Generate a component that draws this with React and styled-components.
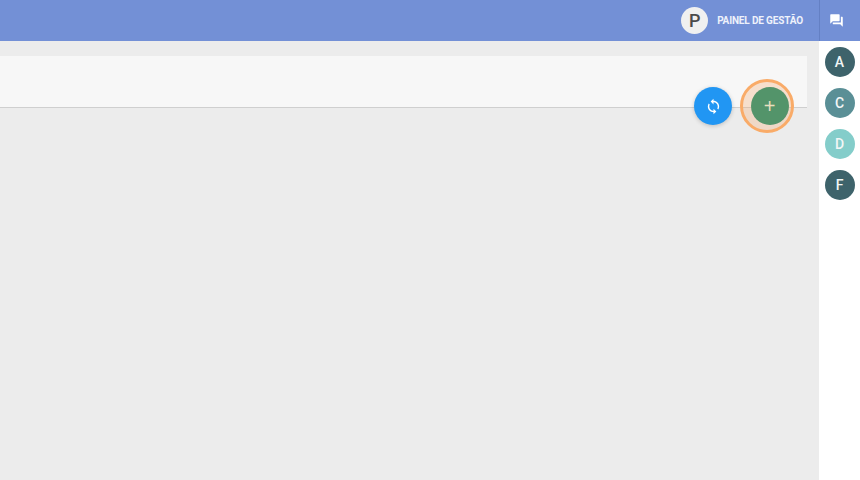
import styled, { createGlobalStyle } from "styled-components";
import { MdForum } from "react-icons/md";

const GlobalStyle = createGlobalStyle`
  html, body {
    margin: 0;
    padding: 0;
    height: 100%;
    overflow: hidden;
    background-color: #ececec;
    font-family: Roboto, "Liberation Sans", sans-serif;
  }
`;

const Page = styled.div`
  width: 860px;
  height: 480px;
  display: flex;
  flex-direction: column;
  overflow: hidden;
`;

const TopBar = styled.header`
  height: 41px;
  flex-shrink: 0;
  display: flex;
  justify-content: flex-end;
  align-items: stretch;
  background-color: #7390d6;
`;

const UserBox = styled.div`
  display: flex;
  align-items: center;
  gap: 9px;
  padding-right: 16px;
`;

const UserAvatar = styled.div`
  width: 27px;
  height: 27px;
  border-radius: 50%;
  display: flex;
  align-items: center;
  justify-content: center;
  background-color: #f0f0f0;
  color: #4a4a4a;
  font-size: 18px;
  font-weight: 500;
`;

const UserLabel = styled.span`
  color: #eef2fb;
  font-size: 10px;
  font-weight: 700;
  letter-spacing: -0.15px;
`;

const ChatButton = styled.div`
  width: 41px;
  box-sizing: border-box;
  padding-right: 7px;
  display: flex;
  align-items: center;
  justify-content: center;
  color: #fff;
  border-left: 1px solid #6480c4;
  font-size: 15px;
`;

const Body = styled.div`
  flex: 1;
  display: flex;
  min-height: 0;
`;

const Main = styled.main`
  flex: 1;
  padding: 15px 12px 0 0;
  min-width: 0;
`;

const Card = styled.section`
  position: relative;
  height: 51px;
  background-color: #f7f7f7;
  border-bottom: 1px solid #cfcfcf;
`;

const Fab = styled.button`
  padding: 0;
  width: 38px;
  height: 38px;
  flex-shrink: 0;
  border: none;
  border-radius: 50%;
  display: flex;
  align-items: center;
  justify-content: center;
  color: #fff;
  background-color: ${(props) => props.color};
`;

const RefreshFab = styled(Fab)`
  position: absolute;
  top: 31px;
  right: 75px;
  box-shadow: 0 1px 4px rgba(0, 0, 0, 0.2);
`;

const AddRing = styled.div`
  position: absolute;
  top: 23px;
  right: 13px;
  width: 54px;
  height: 54px;
  box-sizing: border-box;
  padding-right: 2px;
  display: flex;
  align-items: center;
  justify-content: flex-end;
  border: 3px solid #f9ab68;
  border-radius: 50%;
  background-color: rgba(245, 170, 110, 0.3);
`;

const Plus = styled.span`
  margin-right: 1px;
  color: #e8dfbe;
  font-size: 20px;
  font-weight: 400;
  line-height: 1;
`;

const Sidebar = styled.aside`
  width: 41px;
  flex-shrink: 0;
  display: flex;
  flex-direction: column;
  align-items: center;
  gap: 11px;
  padding-top: 6px;
  background-color: #fff;
`;

const Contact = styled.div`
  width: 30px;
  height: 30px;
  border-radius: 50%;
  display: flex;
  align-items: center;
  justify-content: center;
  color: #f2f6f6;
  font-size: 14px;
  font-weight: 500;
  background-color: ${(props) => props.color};
`;

const contacts = [
  { letter: "A", color: "#3e636b" },
  { letter: "C", color: "#5a8f96" },
  { letter: "D", color: "#84cdca" },
  { letter: "F", color: "#3e636b" },
];

function RefreshIcon() {
  return (
    <svg width="17" height="17" viewBox="0 0 24 24" fill="currentColor">
      <path d="M12 4V1L8 5l4 4V6c3.31 0 6 2.69 6 6 0 1.01-.25 1.97-.7 2.8l1.46 1.46C19.54 15.03 20 13.57 20 12c0-4.42-3.58-8-8-8zm0 14c-3.31 0-6-2.69-6-6 0-1.01.25-1.97.7-2.8L5.24 7.74C4.46 8.97 4 10.43 4 12c0 4.42 3.58 8 8 8v3l4-4-4-4v3z" />
    </svg>
  );
}

function App() {
  return (
    <Page>
      <GlobalStyle />
      <TopBar>
        <UserBox>
          <UserAvatar>P</UserAvatar>
          <UserLabel>PAINEL DE GESTÃO</UserLabel>
        </UserBox>
        <ChatButton>
          <MdForum />
        </ChatButton>
      </TopBar>
      <Body>
        <Main>
          <Card>
            <RefreshFab color="#2196f3">
              <RefreshIcon />
            </RefreshFab>
            <AddRing>
              <Fab color="#53946a">
                <Plus>+</Plus>
              </Fab>
            </AddRing>
          </Card>
        </Main>
        <Sidebar>
          {contacts.map((contact) => (
            <Contact key={contact.letter} color={contact.color}>
              {contact.letter}
            </Contact>
          ))}
        </Sidebar>
      </Body>
    </Page>
  );
}

export default App;
